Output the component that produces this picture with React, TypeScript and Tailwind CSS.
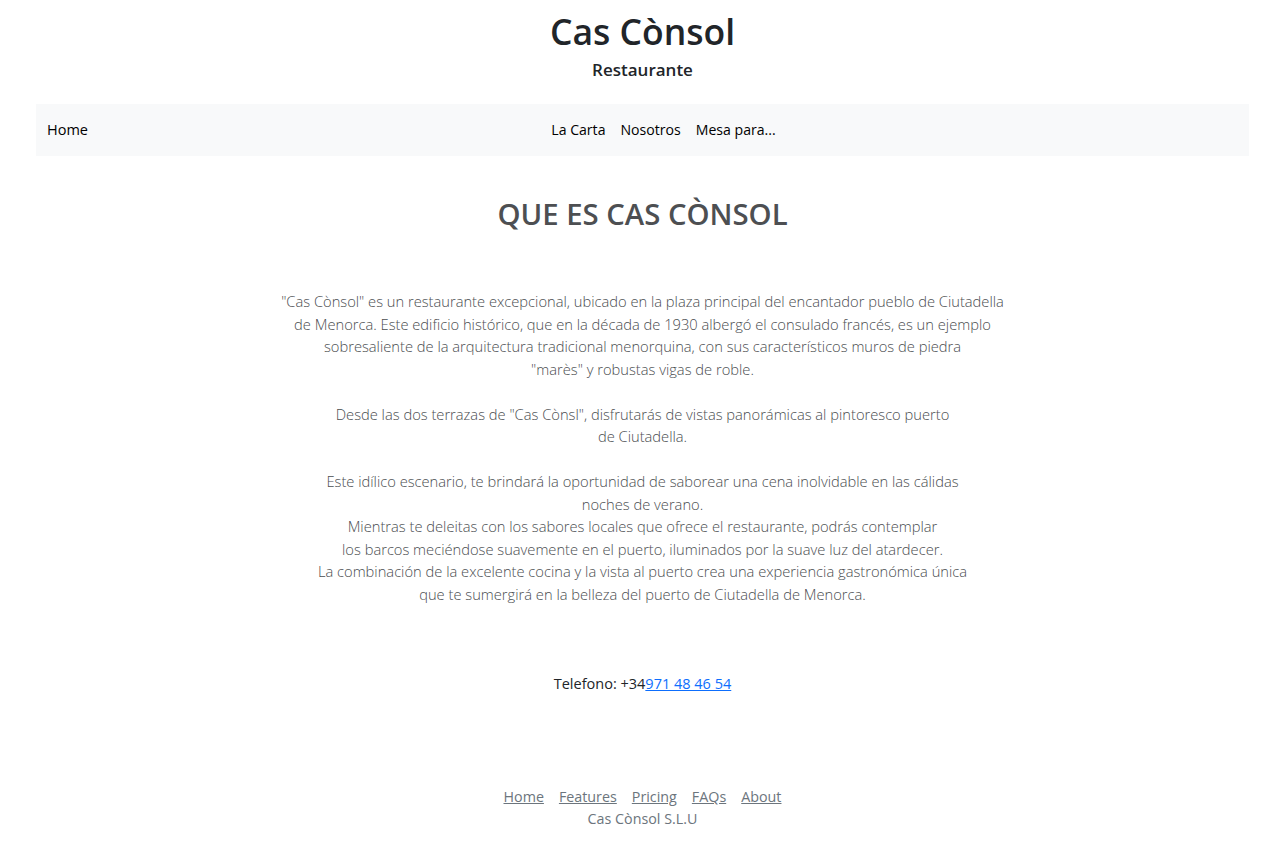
import React from "react";

const font = { fontFamily: '"Open Sans", "Noto Sans", sans-serif' };

export default function App() {
  const p1 = [
    '"Cas Cònsol" es un restaurante excepcional, ubicado en la plaza principal del encantador pueblo de Ciutadella',
    "de Menorca. Este edificio histórico, que en la década de 1930 albergó el consulado francés, es un ejemplo",
    "sobresaliente de la arquitectura tradicional menorquina, con sus característicos muros de piedra",
    '"marès" y robustas vigas de roble.',
  ];
  const p2 = [
    'Desde las dos terrazas de "Cas Cònsl", disfrutarás de vistas panorámicas al pintoresco puerto',
    "de Ciutadella.",
  ];
  const p3 = [
    "Este idílico escenario, te brindará la oportunidad de saborear una cena inolvidable en las cálidas",
    "noches de verano.",
    "Mientras te deleitas con los sabores locales que ofrece el restaurante, podrás contemplar",
    "los barcos meciéndose suavemente en el puerto, iluminados por la suave luz del atardecer.",
    "La combinación de la excelente cocina y la vista al puerto crea una experiencia gastronómica única",
    "que te sumergirá en la belleza del puerto de Ciutadella de Menorca.",
  ];
  const lines = (arr: string[]) =>
    arr.map((l, i) => (
      <div key={i} className="whitespace-nowrap">
        {l}
      </div>
    ));
  return (
    <div style={font} className="min-h-[857px] bg-white text-[#212529]">
      <header className="pt-[7px] text-center">
        <h1 className="text-[35.5px] leading-[48px] font-semibold">Cas Cònsol</h1>
        <div className="mt-[3px] text-[17px] leading-[24px] font-semibold">Restaurante</div>
      </header>
      <nav className="mx-[36px] mt-[22px] h-[52px] bg-[#f8f9fa] flex items-center px-[11px] relative text-[14.5px]">
        <a className="text-black">Home</a>
        <div className="absolute left-0 right-0 flex justify-center gap-[15px] pl-[42px] text-[14.1px] text-black">
          <a>La Carta</a>
          <a>Nosotros</a>
          <a>Mesa para...</a>
        </div>
      </nav>
      <main className="text-center">
        <h2 className="mt-[36px] text-[29.3px] leading-[44px] font-semibold text-[#4d4f52]">
          QUE ES CAS CÒNSOL
        </h2>
        <div className="mt-[54px] text-[14.7px] leading-[22.5px] font-light text-[#4a4d50] flex flex-col items-center">
          {lines(p1)}
          <div className="h-[22.5px]" />
          {lines(p2)}
          <div className="h-[22.5px]" />
          {lines(p3)}
        </div>
        <div className="mt-[68px] text-[14.5px] leading-[22px] text-[#212529]">
          Telefono: +34
          <a className="text-[#0d6efd] underline">971 48 46 54</a>
        </div>
      </main>
      <footer className="mt-[91px] text-center text-[14.3px] leading-[22px] text-[#6c757d]">
        <div className="flex justify-center gap-[15px]">
          <a className="underline">Home</a>
          <a className="underline">Features</a>
          <a className="underline">Pricing</a>
          <a className="underline">FAQs</a>
          <a className="underline">About</a>
        </div>
        <div>Cas Cònsol S.L.U</div>
      </footer>
    </div>
  );
}
